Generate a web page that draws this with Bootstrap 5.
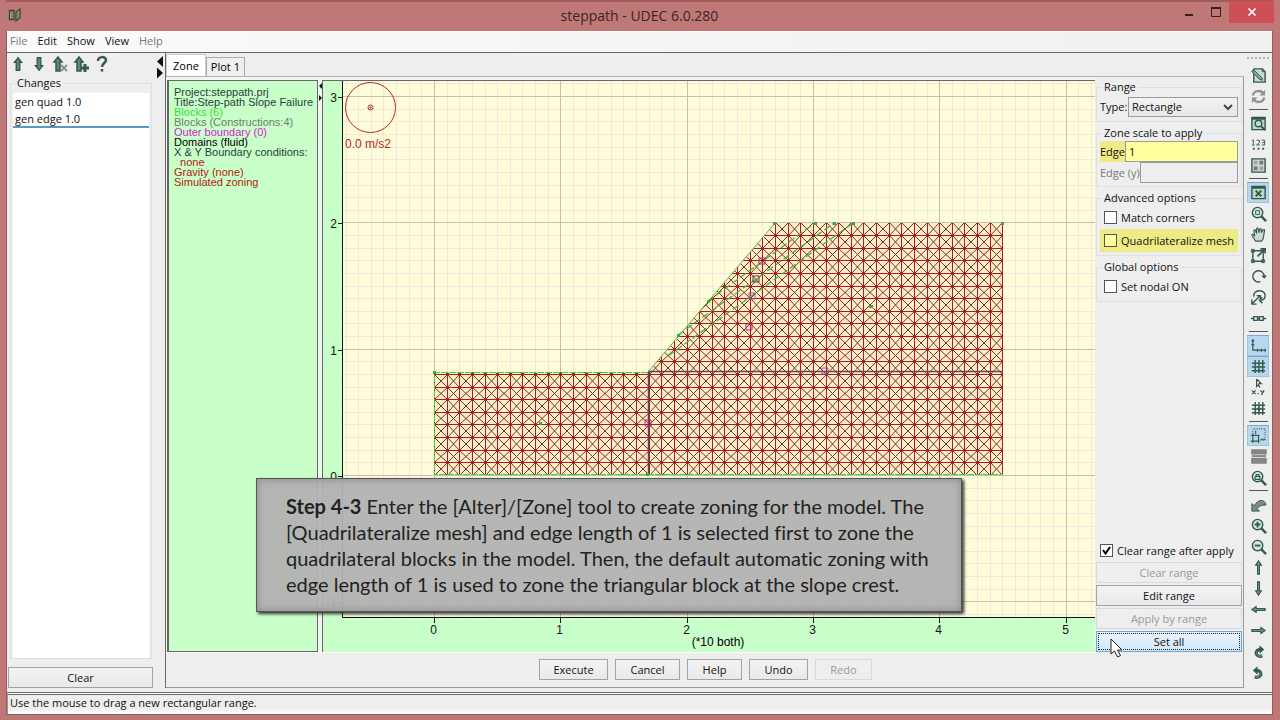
<!DOCTYPE html>
<html lang="en">
<head>
<meta charset="utf-8">
<meta name="viewport" content="width=device-width, initial-scale=1">
<title>steppath - UDEC 6.0.280</title>
<link href="https://cdn.jsdelivr.net/npm/bootstrap@5.3.0/dist/css/bootstrap.min.css" rel="stylesheet">
<style>
:root{--ui:#eeeeee;--edge:#6b6667;--ink:#35584c}
body{font:11px/16px "Open Sans","Noto Sans",sans-serif;color:#111;background:#c07876;min-height:100vh}
.app-window{min-height:100vh;padding:0 7px 7px 6px}
.title-bar{height:31px;color:#3a2424;border-top:2px solid #a05a5a}
.title-bar h1{font-size:14px;line-height:28px;font-weight:400}
.title-bar .logo{left:2px;top:5px}
.win-btns{right:-1px;top:-1px}
.win-btns button{border:0;background:none;height:22px;width:27px;padding:0;display:flex;align-items:center;justify-content:center}
.win-btns .win-close{width:45px;background:#cc5055}
.client{background:var(--ui);border:1px solid #8a5f5f;border-top:0;min-height:0}
.menu-bar{height:22px;background:linear-gradient(90deg,#fafafa,#f0f0f0);border-bottom:1px solid var(--edge);border-top:1px solid #fff;padding-left:3px}
.menu-bar a{color:#111;text-decoration:none;line-height:18px;margin-right:10px}
.menu-bar a.off{color:#777}
.side{width:148px;padding-bottom:4px}
.side-tools{height:22px}
.side-tools button,.icon-bar button{border:0;background:none;padding:0;line-height:0}
.side-tools button{width:21px}
fieldset.group{border:1px solid #dedede;padding:0 3px 3px 3px}
fieldset.group legend{float:none;width:auto;font-size:11px;line-height:16px;margin:0 0 0 2px;padding:0 2px}
.side fieldset.group{margin:0 3px 8px 3px;padding:2px 2px 0;min-width:0}
.changes{background:#fff;min-height:0}
.changes li{height:17px;line-height:17px;padding-left:2px}
.changes li:last-child{border-bottom:2px solid #5b98bd;height:18px;line-height:17px}
.cmd{border:1px solid #a3a3a3;border-radius:0;background:linear-gradient(#f3f3f3,#e9e9e9);color:#111;font-size:11px;line-height:16px;padding:0 2px;height:21px}
.cmd:disabled{color:#999;border-color:#d9d9d9;background:#eee;opacity:1}
.side .cmd{margin:0 2px 0 1px}
.splitter{width:10px;padding-top:2px;line-height:0}
.main{border-left:1px solid var(--edge);margin-bottom:4px;min-width:0}
.tab-strip{height:24px;border-bottom:1px solid #b4b4b4;padding-top:1px}
.tab-strip button{border:1px solid #aaa;border-bottom:0;background:#efefef;padding:0 4px;line-height:18px}
.tab-strip button.on{background:#fff;border-color:#ccc;padding:0 6px;height:22px}
.work{border-right:1px solid #9a9a9a;border-bottom:1px solid #9a9a9a;min-height:0}
.panes{background:#f4f4f4;padding:3px 0 0 1px}
.key{width:151px;background:#c9ffc9;border:1px solid #666;border-left-width:2px;padding:6px 0 0 5px;font:11px/10px "Liberation Sans",sans-serif;color:#24433a;white-space:nowrap}
.pane-split{width:4px;line-height:0;padding-top:2px}
.plot{background:#c9ffc9;border-left:1px solid #666;border-top:1px solid #666;min-width:0;overflow:hidden}
.plot svg{display:block}
.plot text{font:12px "Liberation Sans",sans-serif}
.callout-box{left:90px;bottom:40px;width:706px;max-width:90vw;background:rgba(178,178,178,.95);border:1px solid #555;box-shadow:2px 2px 3px #333,inset 0 0 8px #888;padding:14px 24px 14px 29px;font:20px/26px Lato,sans-serif;font-variant-ligatures:none;color:#222}
.actions{height:35px;padding-top:6px;padding-left:373px;gap:7px;border-top:1px solid #fafafa}
.props{width:148px;padding:2px 1px 35px 1px}
.props fieldset.group{margin-bottom:3px}
.field-row{height:23px}
.props select,.props input[type=text]{border:1px solid #9b9b9b;border-radius:0;font-size:11px;line-height:16px;color:#111;min-width:0}
.props select{height:20px;appearance:none;padding:0 3px;background:linear-gradient(#f3f3f3,#e7e7e7);width:110px}
.props input[type=text]{height:21px;padding:0 3px;background:#eee}
.hl{background:#eeea86}
.props .hl input[type=text]{background:#ffff9e}
.tick{appearance:none;width:13px;height:13px;border:1px solid #555;background:#fff;margin:0 4px 0 0;flex:none}
.tick:checked{background:#fff url("data:image/svg+xml,%3Csvg xmlns='http://www.w3.org/2000/svg' viewBox='0 0 11 11'%3E%3Cpath d='M2 5l2.5 3.5L9 2' fill='none' stroke='%23000' stroke-width='2'/%3E%3C/svg%3E")}
.hl .tick{background:#ffff9e}
.props .cmd.default{background:linear-gradient(#eaf4fc,#cfe6f8);border-color:#6ea5d2;outline:1px dotted #223;outline-offset:-3px}
.pointer{left:14px;top:7px}
.icon-bar{width:28px;padding-top:2px}
.icon-bar button{height:21px;width:22px;display:flex;align-items:center;justify-content:center}
.icon-bar button.on{background:#b6d8ee;border:1px solid #9cc4de;border-top-color:#7fa5c0}
.icon-bar hr{width:19px;margin:2px 0 3px;border-top:1px solid #555;opacity:1;color:#555}
.icon-bar .grip{width:22px;height:8px;border-top:2px dotted #b5b5b5;margin-top:2px}
.icon-bar svg,.side-tools svg{fill:none;stroke:var(--ink);stroke-width:1.5}
.status{height:22px;border-top:3px double #6c6c6c;background:linear-gradient(#eee 70%,#fff);border-left:1px solid #999;padding-left:2px;line-height:15px}
</style>
</head>
<body>
<svg width="0" height="0" class="position-absolute" aria-hidden="true">
  <defs>
    <symbol id="up" viewBox="0 0 18 18"><path d="M9 2L12 6.500H10V16H8V6.500H6z" fill="#6f9d88" stroke-width="1.200"/></symbol>
    <symbol id="fatup" viewBox="0 0 18 18"><path d="M9 2L13 7H11V16H7V7H5z" fill="#5e8875"/></symbol>
    <symbol id="lens" viewBox="0 0 18 18"><circle cx="8" cy="8" r="5.500" fill="#d3e8dc"/><path d="M12 12l5 5" stroke-width="2.500"/></symbol>
    <symbol id="turn" viewBox="0 0 18 18"><path d="M13 13.500C9 15.500 5.500 12 7 9 7.700 7.500 9 7 10.500 7" stroke-width="3.400"/><path d="M10 2.500L15 7l-5 4.500z" fill="#35584c" stroke="none"/><path d="M12.500 13.500C9.500 15 6 12 7.500 9" stroke="#7ba691" stroke-width="1"/></symbol>
  </defs>
</svg>
<div class="app-window d-flex flex-column">
  <header class="title-bar position-relative text-center">
    <svg class="logo position-absolute" width="15" height="16" viewBox="0 0 15 16" fill="#b8a48c" stroke="#2f4a35" stroke-width="1.300"><path d="M1.500 3.500h4.500v9H1.500zM8 14V5l4-3v9z"/><path d="M4 4v8M10 5v8" stroke-width=".7"/></svg>
    <h1 class="m-0">steppath - UDEC 6.0.280</h1>
    <div class="win-btns position-absolute d-flex">
      <button aria-label="Minimize"><svg width="10" height="12"><path d="M1 9h8" stroke="#3a1c1c" stroke-width="2"/></svg></button>
      <button aria-label="Maximize"><svg width="12" height="12" fill="none" stroke="#3a1c1c"><path d="M1.500 2v8.500h9V2M1 2.500h10" /><path d="M1 2h10" stroke-width="2"/></svg></button>
      <button class="win-close" aria-label="Close"><svg width="10" height="10" stroke="#fff" stroke-width="1.600"><path d="M1.500 1.500l7 7M8.500 1.500l-7 7"/></svg></button>
    </div>
  </header>
  <div class="client flex-grow-1 d-flex flex-column">
    <nav class="menu-bar d-flex"><a class="off" href="#">File</a><a href="#">Edit</a><a href="#">Show</a><a href="#">View</a><a class="off" href="#">Help</a></nav>
    <div class="flex-grow-1 d-flex">
      <aside class="side d-flex flex-column flex-shrink-0">
        <div class="side-tools d-flex align-items-center">
          <button aria-label="Move up"><svg width="16" height="18"><use href="#fatup" width="16" height="18"/></svg></button>
          <button aria-label="Move down"><svg width="16" height="18" viewBox="0 0 18 18"><path d="M9 16L13 11H11V2H7V11H5z" fill="#5e8875"/></svg></button>
          <button aria-label="Delete change"><svg width="18" height="18" viewBox="0 0 18 18"><path d="M7 2L11 7H9V16H5V7H3z" fill="#5e8875"/><path d="M10 10l6 6M16 10l-6 6" stroke="#8b918e" stroke-width="2"/></svg></button>
          <button aria-label="Add change"><svg width="18" height="18" viewBox="0 0 18 18"><path d="M7 2L11 7H9V16H5V7H3z" fill="#5e8875"/><path d="M13 9v8M9 13h8" stroke-width="3"/></svg></button>
          <button aria-label="What is this"><svg width="14" height="18" viewBox="0 0 14 18"><path d="M3 6c0-5 8-5 8-1 0 3-4 3-4 7M7 14v2.500" stroke-width="2.500"/></svg></button>
        </div>
        <fieldset class="group flex-grow-1 d-flex flex-column">
          <legend>Changes</legend>
          <ul class="changes list-unstyled mb-0 flex-grow-1"><li>gen quad 1.0</li><li>gen edge 1.0</li></ul>
        </fieldset>
        <button class="cmd">Clear</button>
      </aside>
      <div class="splitter flex-shrink-0"><svg width="10" height="24" fill="#111"><path d="M8 1v11L2 6.500zM2 12.500l6 5.500-6 5.500z"/></svg></div>
      <main class="main flex-grow-1 d-flex flex-column">
        <div class="tab-strip d-flex align-items-end" role="tablist"><button class="on" role="tab" aria-selected="true">Zone</button><button role="tab" aria-selected="false">Plot 1</button></div>
        <div class="work flex-grow-1 d-flex">
          <div class="flex-grow-1 d-flex flex-column" style="min-width:0">
            <div class="panes position-relative flex-grow-1 d-flex">
              <section class="key flex-shrink-0">
                <div>Project:steppath.prj</div><div>Title:Step-path Slope Failure</div>
                <div style="color:#35e035">Blocks (6)</div><div style="color:#68806c">Blocks (Constructions:4)</div>
                <div style="color:#d81ad8">Outer boundary (0)</div><div style="color:#000">Domains (fluid)</div>
                <div>X &amp; Y Boundary conditions:</div><div style="color:#b01c10">&nbsp; none</div>
                <div style="color:#b01c10">Gravity (none)</div><div style="color:#b01c10">Simulated zoning</div>
              </section>
              <div class="pane-split flex-shrink-0"><svg width="4" height="24" fill="#111"><path d="M4 1v6L1 4zM1 13l3 3-3 3z"/></svg></div>
              <section class="plot flex-grow-1">
                <svg id="plot" width="100%" height="571" viewBox="0 0 772 571" preserveAspectRatio="xMinYMin slice" role="img" aria-label="Zoned slope model">
                  <defs><clipPath id="body"><path d="M111 394V291H325L452 142H680V394z"/></clipPath></defs>
                  <rect x="20" width="752" height="536" fill="#fefcd9"/>
                  <g id="grid" shape-rendering="crispEdges"></g>
                  <g id="mesh" clip-path="url(#body)"></g>
                  <g fill="none">
                    <path d="M325 290.500H680M325.500 291V394" stroke="#5d4856" stroke-width="1.500"/>
                    <path d="M325 291.500H111.500V393.500H680" stroke="#35d93b" stroke-dasharray="7 1"/>
                    <path d="M325 291L452 142" stroke="#55b84b"/>
                    <path d="M385 220L492 142M355 254L511 142M345 275L530 142" stroke="#38b93b" stroke-dasharray="7 3" stroke-width="1.300"/>
                    <g stroke="#c02070"><path d="M436 177h6v6h-6zM423 243h6v6h-6zM322 339h6v6h-6z"/><path d="M499 287h6v6h-6zM426 212h6v6h-6z" stroke="#a24a9a"/><path d="M430 195h6v6h-6z" stroke="#4d4038"/></g>
                  </g>
                  <g fill="#37a936"><path d="M110 290h3v3h-3zM450 141h3v3h-3zM491 141h3v3h-3zM510 141h3v3h-3zM529 141h3v3h-3zM678 141h3v3h-3zM354 253h3v3h-3zM384 219h3v3h-3zM546 224h4v3h-4zM216 341h3v3h-3zM323 392h3v3h-3z"/></g>
                  <g fill="none" stroke="#b4291f"><circle cx="47.500" cy="26.500" r="25"/><circle cx="47.500" cy="26.500" r="2.500"/><path d="M47 26h1v1h-1z"/></g>
                  <text x="22" y="67" fill="#b4291f">0.0 m/s2</text>
                  <path d="M19.500 0V536.500H772" fill="none" stroke="#111"/>
                  <g id="ticks" fill="#111"></g>
                  <text x="395" y="565" text-anchor="middle">(*10 both)</text>
                </svg>
              </section>
              <div class="callout-box position-absolute"><b>Step 4-3</b> Enter the [Alter]/[Zone] tool to create zoning for the model. The [Quadrilateralize mesh] and edge length of 1 is selected first to zone the quadrilateral blocks in the model. Then, the default automatic zoning with edge length of 1 is used to zone the triangular block at the slope crest.</div>
            </div>
            <div class="actions d-flex"><button class="cmd" style="width:69px">Execute</button><button class="cmd" style="width:65px">Cancel</button><button class="cmd" style="width:55px">Help</button><button class="cmd" style="width:59px">Undo</button><button class="cmd" style="width:57px" disabled>Redo</button></div>
          </div>
          <form class="props d-flex flex-column flex-shrink-0">
            <fieldset class="group"><legend>Range</legend>
              <div class="field-row d-flex align-items-center justify-content-between"><label for="type">Type:</label>
                <span class="position-relative d-flex"><select id="type"><option>Rectangle</option></select><svg class="position-absolute end-0 top-0 pe-none m-1" width="12" height="12" fill="none" stroke="#444" stroke-width="2"><path d="M2 4l4 4 4-4"/></svg></span></div>
            </fieldset>
            <fieldset class="group"><legend>Zone scale to apply</legend>
              <div class="hl d-flex align-items-center"><label for="ex">Edge</label><input id="ex" class="flex-grow-1" type="text" value="1"></div>
              <div class="d-flex align-items-center"><label class="text-nowrap" for="ey" style="color:#777">Edge (y)</label><input id="ey" class="flex-grow-1" type="text" disabled></div>
            </fieldset>
            <fieldset class="group"><legend>Advanced options</legend>
              <label class="field-row d-flex align-items-center ps-1"><input class="tick" type="checkbox">Match corners</label>
              <label class="field-row hl d-flex align-items-center ps-1 text-nowrap"><input class="tick" type="checkbox">Quadrilateralize mesh</label>
            </fieldset>
            <fieldset class="group"><legend>Global options</legend>
              <label class="field-row d-flex align-items-center ps-1"><input class="tick" type="checkbox">Set nodal ON</label>
            </fieldset>
            <label class="field-row d-flex align-items-center mt-auto ps-1 text-nowrap"><input class="tick" type="checkbox" checked>Clear range after apply</label>
            <div class="d-grid position-relative" style="gap:2px">
              <button type="button" class="cmd" disabled>Clear range</button>
              <button type="button" class="cmd">Edit range</button>
              <button type="button" class="cmd" disabled>Apply by range</button>
              <div class="position-relative d-grid"><button type="button" class="cmd default">Set all</button>
                <svg class="pointer position-absolute pe-none" width="13" height="20"><path d="M1 1v15l3.500-3 3 6 3-1.500-3-5.500H12z" fill="#fff" stroke="#222"/></svg></div>
            </div>
          </form>
        </div>
      </main>
      <div class="icon-bar d-flex flex-column align-items-center flex-shrink-0" role="toolbar" id="icons"><div class="grip"></div></div>
    </div>
    <footer class="status">Use the mouse to drag a new rectangular range.</footer>
  </div>
</div>
<script>
// model units to drawing pixels
const S = 12.63, X0 = 111, Y0 = 394;
const px = i => Math.round(X0 + i * S) + .5, py = j => Math.round(Y0 - j * S) + .5;
let minor = '', major = '';
for (let i = -7; i <= 52; i++) if (px(i) > 20) { const d = `M${px(i)} 0V536`; i % 10 ? minor += d : major += d; }
for (let j = -11; j <= 31; j++) { const d = `M20 ${py(j)}H772`; j % 10 ? minor += d : major += d; }
document.getElementById('grid').innerHTML =
  `<path d="${minor}" stroke="#eee9dc"/><path d="${major}" stroke="#c2bfb6"/>`;
let lines = '', diag = '';
for (let i = 0; i <= 45; i++) lines += `M${px(i)} 142V394`;
for (let j = 0; j <= 20; j++) lines += `M111 ${py(j)}H680`;
for (let i = 0; i < 45; i++) for (let j = 0; j < 20; j++)
  diag += `M${px(i)} ${py(j)}L${px(i + 1)} ${py(j + 1)}M${px(i)} ${py(j + 1)}L${px(i + 1)} ${py(j)}`;
document.getElementById('mesh').innerHTML =
  `<path d="M111 142h570v252h-570z" fill="#ffedcc"/><path d="${diag}" stroke="#7c3418"/><path d="${lines}" stroke="#ab1a20" shape-rendering="crispEdges"/>`;
let t = '';
for (let i = 0; i <= 5; i++) t += `<path d="M${px(i * 10)} 537v5" stroke="#111"/><text x="${px(i * 10) - 1}" y="553" text-anchor="middle">${i}</text>`;
for (let j = -1; j <= 3; j++) t += `<path d="M15 ${py(j * 10) + 1}h4" stroke="#111"/><text x="14" y="${py(j * 10) + 5}" text-anchor="end">${j}</text>`;
document.getElementById('ticks').innerHTML = t;

// toolbar icons: [label, drawing, pressed]; null is a separator
const lens = '<use href="#lens" width="18" height="18"/>';
const hash = '<path d="M5.500 2v14M9.500 2v14M13.500 2v14M2 5.500h14M2 9.500h14M2 13.500h14"/>';
const icons = [
  ['Edit page', '<path d="M4 2h9l3 3v11H4z" fill="#c3dccf"/><path d="M13 2v3h3" stroke-width="1"/><path d="M2 4l3 0 8 8 0 2-3-1-8-8z" fill="#8ba497" stroke-width="1"/>'],
  ['Refresh', '<path d="M3 8c1-6 9-6 11-2M15 10c-1 6-9 6-11 2" stroke="#8e9491" stroke-width="2.500"/><path d="M16 2v6h-6zM2 16v-6h6z" fill="#8e9491" stroke="none"/>'], null,
  ['View window', '<path d="M2 2.500h14v13H2z" fill="#bed9cb"/><path d="M2 4h14" stroke-width="2"/><circle cx="9" cy="9" r="3.500"/><path d="M12 12l4 4" stroke-width="2"/>'],
  ['Numbers', '<path d="M2 5l1.500-1v5M2 9.500h3M7 4.500h3V7L7 9.500h3.500M12.500 4.500h3v5h-3M13 7h3" stroke-width="1"/><path d="M3 13.500h2M8 13.500h2M13 13.500h2" stroke-width="2"/>'],
  ['Tiles', '<path d="M2 2h14v14H2z" fill="#c8d8d0"/><path d="M4 4h4v4H4zM10 10h4v4h-4z" fill="#9ca7a1" stroke="none"/><path d="M10 4h4v4h-4zM4 10h4v4H4z" fill="#6f7c75" stroke="none"/>'], null,
  ['Fit view', '<path d="M2 2.500h14v13H2z" fill="#bdd8c5"/><path d="M2 4h14" stroke-width="2"/><path d="M6 7l6 6M12 7l-6 6" stroke-width="2"/>', 1],
  ['Zoom box', lens + '<path d="M6 6h4v4H6z" stroke-width="1"/>'],
  ['Pan', '<path d="M6 16L2 10c0-2 2-1 3 1L4 5c1-2 2-1 3 3V3c1-2 2-1 2.500 4l1-4c1-1 2 0 1.500 4l2-3c1-1 2 0 1 3-1 5 0 7-3 9z" fill="#cddbd4" stroke-width="1.200"/>'],
  ['Resize', '<path d="M3 4h11v11H3z"/><path d="M1.500 2.500h3v3h-3zM12.500 13.500h3v3h-3zM1.500 13.500h3v3h-3z" stroke-width="1"/><path d="M8 10l7-7M11 2h5v5" stroke-width="1.800"/>'],
  ['Rotate', '<path d="M11 14.500a6 6 0 1 1 4-6"/><path d="M12 8h6l-3 3.500z" fill="#35584c" stroke="none"/>'],
  ['Rotate view', '<path d="M4 8c-1-8 12-8 12-1 0 3-2 5-5 5"/><path d="M2 16L11 7M2 11v5h5M7 7h4v4M13 9l-3 3 3 3"/>'],
  ['Link', '<path d="M1 9h3M8 9h2M14 9h3M4 7h4v4H4zM10 7h4v4h-4z"/>'], null,
  ['Axes', '<path d="M3 2v12h14M1.500 4h3M1.500 8h3M8 12.500v3M12 12.500v3M16 12.500v3" stroke-width="1.300"/>', 1],
  ['Grid', hash, 1],
  ['Coordinates', '<path d="M7 0v8l2-2 1.500 3M7 0l5 5H9M2 12l4 4M6 12l-4 4M8 16l1-1M11 12l2 2M15 12l-3 5" stroke-width="1.300"/>'],
  ['Snap', hash + '<circle cx="9.500" cy="9.500" r="1.500" stroke-width="1"/>'], null,
  ['Select region', '<path d="M3 8V2h13v12h-5" stroke-width="1.200" stroke-dasharray="1 1.500"/><path d="M3 9h6v6H3zM1 9h9M1 15h9M3 7v10M9 8v9M11 13h5M6 4v4" stroke-width="1.200"/>', 1],
  ['Bands', '<path d="M2 2h15v4H2zM2 11h15v5H2z" fill="#858585" stroke="#858585"/><path d="M2 8.500h15" stroke="#858585" stroke-width="2"/>'],
  ['Zoom lock', lens + '<path d="M5.500 8h5v3h-5zM6.500 8V6h3v2" stroke-width="1.200"/>'], null,
  ['Undo view', '<path d="M2 8v8h8l-2.500-2.500c2-3 5-4 9.500-4C16 3 8 3 4.500 10.500z" fill="#7c8b83" stroke-width="1"/>'],
  ['Zoom in', lens + '<path d="M5 8h6M8 5v6" stroke-width="2"/>'],
  ['Zoom out', lens + '<path d="M5 8h6" stroke-width="2"/>'],
  ['Up', '<use href="#up"/>'], ['Down', '<use href="#up" transform="rotate(180 9 9)"/>'],
  ['Left', '<use href="#up" transform="rotate(-90 9 9)"/>'], ['Right', '<use href="#up" transform="rotate(90 9 9)"/>'],
  ['Turn right', '<use href="#turn"/>'], ['Turn left', '<use href="#turn" transform="matrix(-1 0 0 1 18 0)"/>']
];
document.getElementById('icons').insertAdjacentHTML('beforeend', icons.map(k => k
  ? `<button class="${k[2] ? 'on' : ''}" aria-label="${k[0]}"><svg width="17" height="17" viewBox="0 0 18 18">${k[1]}</svg></button>` : '<hr>').join(''));
</script>
<script src="https://cdn.jsdelivr.net/npm/bootstrap@5.3.0/dist/js/bootstrap.bundle.min.js"></script>
</body>
</html>
